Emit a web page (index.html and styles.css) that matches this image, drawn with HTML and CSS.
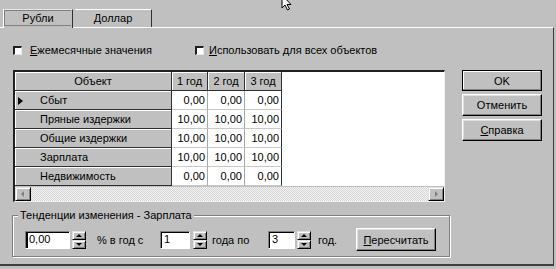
FILE: index.html
```html
<!DOCTYPE html>
<html lang="ru">
<head>
    <meta charset="utf-8">
    <link rel="stylesheet" href="styles.css">
</head>
<body>
    <div class="window">
        <svg class="cursor" width="12" height="14" viewBox="0 0 12 14">
            <path d="M1 -5 L1 8 L4 5 L6.5 10 L8.5 9 L6 4.5 L10 4.5 Z" fill="#fff" stroke="#000" stroke-width="1"/>
        </svg>
        <div class="tabs">
            <div class="tab active"><span>Рубли</span></div>
            <div class="tab">Доллар</div>
        </div>
        <div class="panel">
            <div class="checks">
                <label class="check first"><span class="box"></span><span><u>Е</u>жемесячные значения</span></label>
                <label class="check second"><span class="box"></span><span><u>И</u>спользовать для всех объектов</span></label>
            </div>
            <div class="main">
                <div class="grid">
                    <div class="cells">
                        <div class="cell head">Объект</div>
                        <div class="cell head">1 год</div>
                        <div class="cell head">2 год</div>
                        <div class="cell head">3 год</div>
                        <div class="blank"></div>

                        <div class="cell name current"><span class="mark"></span>Сбыт</div>
                        <div class="cell num">0,00</div>
                        <div class="cell num">0,00</div>
                        <div class="cell num last">0,00</div>

                        <div class="cell name">Пряные издержки</div>
                        <div class="cell num">10,00</div>
                        <div class="cell num">10,00</div>
                        <div class="cell num last">10,00</div>

                        <div class="cell name">Общие издержки</div>
                        <div class="cell num">10,00</div>
                        <div class="cell num">10,00</div>
                        <div class="cell num last">10,00</div>

                        <div class="cell name">Зарплата</div>
                        <div class="cell num">10,00</div>
                        <div class="cell num">10,00</div>
                        <div class="cell num last">10,00</div>

                        <div class="cell name">Недвижимость</div>
                        <div class="cell num">0,00</div>
                        <div class="cell num">0,00</div>
                        <div class="cell num last">0,00</div>
                    </div>
                    <div class="hscroll">
                        <div class="arrow left"></div>
                        <div class="track"></div>
                        <div class="arrow right"></div>
                    </div>
                </div>
                <div class="buttons">
                    <button type="button" class="btn default">OK</button>
                    <button type="button" class="btn">Отменить</button>
                    <button type="button" class="btn"><u>С</u>правка</button>
                </div>
            </div>
            <fieldset class="trend">
                <legend>Тенденции изменения - Зарплата</legend>
                <div class="trend-row">
                    <div class="edit caret w45">0,00</div>
                    <div class="spin"><span class="up"></span><span class="down"></span></div>
                    <span class="lbl l1">% в год с</span>
                    <div class="edit w30">1</div>
                    <div class="spin s3"><span class="up"></span><span class="down"></span></div>
                    <span class="lbl l2">года по</span>
                    <div class="edit w27">3</div>
                    <div class="spin"><span class="up"></span><span class="down"></span></div>
                    <span class="lbl l3">год.</span>
                    <button type="button" class="btn recalc"><u>П</u>ересчитать</button>
                </div>
            </fieldset>
        </div>
    </div>
</body>
</html>
```

FILE: styles.css
```css
* {
    box-sizing: border-box;
}

body {
    margin: 0;
    background-color: #c0c0c0;
    font-family: "Liberation Sans", Arial, sans-serif;
    font-size: 11px;
    color: #000;
}

.window {
    position: relative;
    width: 556px;
    height: 269px;
    overflow: hidden;
    background-color: #c0c0c0;
}

.cursor {
    position: absolute;
    left: 281px;
    top: 0;
}

/* tabs */
.tabs {
    display: flex;
    align-items: flex-start;
    height: 27px;
    padding: 9px 0 0 3px;
}

.tab {
    height: 18px;
    line-height: 16px;
    text-align: center;
    border-top: 1px solid #fff;
    border-left: 1px solid #fff;
    border-right: 1px solid #303030;
    background-color: #c0c0c0;
}

.tab.active {
    position: relative;
    width: 70px;
    height: 19px;
    padding: 0 1px 0 0;
    border-top-color: #e8e8e8;
}

.tab.active span {
    display: block;
    height: 16px;
    border: 1px solid #808080;
    border-right: none;
    line-height: 14px;
}

.tab + .tab {
    width: 77px;
    margin-left: 2px;
    border-left: none;
}

/* panel */
.panel {
    width: 554px;
    height: 239px;
    border-top: 1px solid #fff;
    border-right: 1px solid #404040;
    border-bottom: 2px solid #404040;
}

.checks {
    display: flex;
    align-items: center;
    height: 16px;
    margin-top: 14px;
}

.check {
    display: flex;
    align-items: center;
}

.check.first {
    width: 182px;
    margin-left: 13px;
}

.box {
    display: inline-block;
    width: 9px;
    height: 9px;
    background-color: #fff;
    border-top: 2px solid #202020;
    border-left: 2px solid #202020;
    border-right: 1px solid #e8e8e8;
    border-bottom: 1px solid #e8e8e8;
}

.check.first .box {
    margin-right: 8px;
}

.check.second .box {
    margin-right: 5px;
}

u {
    text-decoration: underline;
    text-underline-offset: 1px;
}

/* grid */
.main {
    display: flex;
    margin-top: 12px;
}

.grid {
    width: 432px;
    height: 132px;
    margin-left: 13px;
    display: flex;
    flex-direction: column;
    border-style: solid;
    border-width: 2px 1px 1px 2px;
    border-color: #202020 #f0f0f0 #f0f0f0 #202020;
}

.cells {
    display: grid;
    grid-template-columns: 157px 36px 37px 37px 1fr;
    grid-template-rows: repeat(6, 19px);
}

.cell {
    line-height: 18px;
    white-space: nowrap;
    overflow: hidden;
}

.head,
.name {
    background-color: #c0c0c0;
    border-right: 1px solid #303030;
    border-bottom: 1px solid #303030;
    box-shadow: inset 1px 1px 0 #fff;
}

.head {
    text-align: center;
}

.name {
    padding-left: 25px;
}

.name.current {
    padding-left: 3px;
}

.mark {
    display: inline-block;
    width: 0;
    height: 0;
    border-left: 5px solid #000;
    border-top: 4px solid transparent;
    border-bottom: 4px solid transparent;
    margin-right: 17px;
    vertical-align: -1px;
}

.num {
    background-color: #fff;
    text-align: right;
    padding-right: 2px;
    border-right: 1px solid #a8a8a8;
    border-bottom: 1px solid #c8c8c8;
}

.num.last {
    border-right-color: #303030;
}

.blank {
    grid-column: 5;
    grid-row: 1 / span 6;
    background-color: #fff;
}

.hscroll {
    display: flex;
    height: 15px;
    margin-top: 1px;
}

.track {
    flex: 1;
    background: repeating-conic-gradient(#f4f4f4 0 25%, #d4d4d4 0 50%) 0 0 / 2px 2px;
}

.arrow,
.spin span {
    position: relative;
    background-color: #c0c0c0;
    border: 1px solid;
    border-color: #e0e0e0 #000 #000 #e0e0e0;
    box-shadow: inset 1px 1px 0 #fff, inset -1px -1px 0 #808080;
}

.arrow {
    width: 16px;
}

.arrow::after {
    content: "";
    position: absolute;
    top: 3px;
    border-top: 3px solid transparent;
    border-bottom: 3px solid transparent;
}

.arrow.left::after {
    left: 5px;
    border-right: 3px solid #808080;
}

.arrow.right::after {
    left: 6px;
    border-left: 3px solid #808080;
}

/* buttons */
.buttons {
    display: flex;
    flex-direction: column;
    gap: 3px;
    width: 80px;
    margin-left: 17px;
}

.btn {
    height: 22px;
    padding: 0;
    font-family: inherit;
    font-size: 11px;
    color: #000;
    background-color: #c0c0c0;
    border: 1px solid;
    border-color: #fff #000 #000 #fff;
    box-shadow: inset -1px -1px 0 #808080, inset 1px 1px 0 #dfdfdf;
}

.btn.default {
    height: 21px;
    border-color: #000;
    box-shadow: inset -1px -1px 0 #808080, inset 1px 1px 0 #fff;
}

/* trend group */
.trend {
    width: 438px;
    height: 48px;
    margin: 7px 0 0 12px;
    padding: 0;
    min-inline-size: 0;
    border: 1px solid #808080;
    box-shadow: 1px 1px 0 #fff, inset 1px 1px 0 #fff;
}

.trend legend {
    margin-left: 5px;
    padding: 0 2px;
    line-height: 12px;
    background-color: #c0c0c0;
}

.trend-row {
    display: flex;
    align-items: center;
    height: 23px;
    margin: 7px 0 0 12px;
}

.edit {
    height: 18px;
    padding-left: 3px;
    line-height: 14px;
    background-color: #fff;
    border: 1px solid;
    border-color: #808080 #fff #fff #808080;
    box-shadow: inset 1px 1px 0 #000;
}

.edit.caret {
    box-shadow: inset 2px 1px 0 #000;
}

.w45 { width: 45px; }
.w30 { width: 30px; }
.w27 { width: 27px; }

.spin {
    display: flex;
    flex-direction: column;
    width: 14px;
    height: 18px;
    margin-left: 2px;
}

.spin.s3 {
    margin-left: 3px;
}

.spin span {
    height: 9px;
}

.spin span::after {
    content: "";
    position: absolute;
    left: 3px;
    top: 2px;
    border-left: 3px solid transparent;
    border-right: 3px solid transparent;
}

.spin .up::after {
    border-bottom: 3px solid #000;
}

.spin .down::after {
    border-top: 3px solid #000;
}

.lbl {
    white-space: nowrap;
}

.l1 { width: 63px; margin-left: 11px; }
.l2 { width: 56px; margin-left: 5px; }
.l3 { width: 38px; margin-left: 7px; }

.btn.recalc {
    width: 80px;
    height: 23px;
}
```
